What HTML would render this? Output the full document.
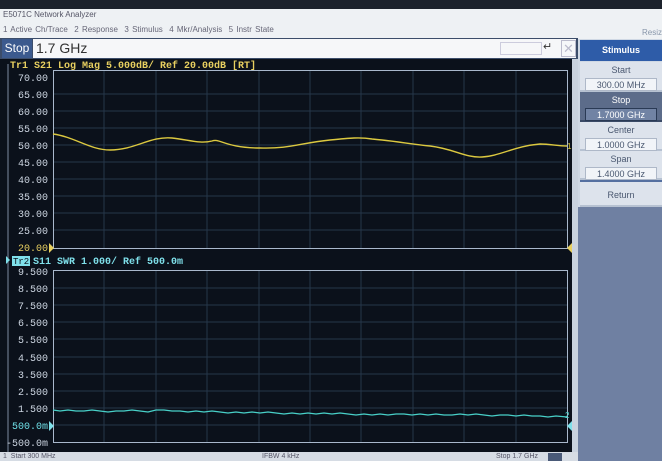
<!DOCTYPE html>
<html><head><meta charset="utf-8"><style>
*{margin:0;padding:0;box-sizing:border-box}
body{width:662px;height:461px;overflow:hidden;background:#dfe4ea;font-family:"Liberation Sans",sans-serif;position:relative}
.a{position:absolute}
.btn{position:absolute;left:580px;width:82px;background:#dde3ec;border-bottom:2px solid #b7c2d2;text-align:center;color:#4a5870;font-size:9px}
.btn .v{margin:3px auto 0;width:72px;height:13px;background:#f1f4f8;border:1px solid #aeb8c8;line-height:12px;font-size:9px}
</style></head><body>
<div class="a" style="left:0;top:0;width:662px;height:9px;background:#1c222c"></div>
<div class="a" style="left:0;top:9px;width:662px;height:30px;background:#eef1f4"></div>
<div class="a" style="left:3px;top:10px;font-size:8px;color:#556">E5071C Network Analyzer</div>
<div class="a" style="left:3px;top:25px;font-size:8px;color:#667;word-spacing:1px">1 Active Ch/Trace &nbsp;2 Response &nbsp;3 Stimulus &nbsp;4 Mkr/Analysis &nbsp;5 Instr State</div>
<div class="a" style="left:642px;top:28px;font-size:8px;color:#8896aa">Resiz</div>
<div class="a" style="left:0;top:38px;width:578px;height:21px;background:#3c4d6a"></div>
<div class="a" style="left:2px;top:39px;width:30px;height:19px;background:#3c5a8e;color:#fff;font-size:12px;line-height:19px;text-align:center">Stop</div>
<div class="a" style="left:33px;top:39px;width:543px;height:19px;background:#f6f7f9;color:#333;font-size:14px;line-height:19px;padding-left:3px">1.7 GHz</div>
<div class="a" style="left:500px;top:42px;width:42px;height:13px;border:1px solid #ccd;"></div>
<div class="a" style="left:543px;top:40px;width:18px;height:17px;font-size:11px;color:#333">↵</div>
<div class="a" style="left:561px;top:40px;width:15px;height:17px;border:1px solid #bbc;color:#bbc;font-size:13px;line-height:15px;text-align:center">✕</div>
<div class="a" style="left:0;top:59px;width:578px;height:393px;background:#0b111b"></div>
<div class="a" style="left:572px;top:59px;width:6px;height:393px;background:#c9d2de"></div>
<svg class="a" style="left:0;top:59px" width="572" height="393" viewBox="0 59 572 393">
<g stroke="#26364a" stroke-width="1">
<path d="M53 94H567M53 111H567M53 128H567M53 145H567M53 162H567M53 179H567M53 196H567M53 213H567M53 230H567"/>
<path d="M53 288H567M53 305H567M53 322H567M53 339H567M53 357H567M53 374H567M53 391H567M53 408H567M53 425H567"/>
<path d="M104 70V248M156 70V248M207 70V248M259 70V248M310 70V248M361 70V248M413 70V248M464 70V248M516 70V248"/>
<path d="M104 270V442M156 270V442M207 270V442M259 270V442M310 270V442M361 270V442M413 270V442M464 270V442M516 270V442"/>
</g>
<rect x="53.5" y="70.5" width="514" height="178" fill="none" stroke="#a9b8cc"/>
<rect x="53.5" y="270.5" width="514" height="172" fill="none" stroke="#a9b8cc"/>
<line x1="8" y1="64" x2="8" y2="452" stroke="#7d8aa0" stroke-width="1"/>
<g font-family="Liberation Mono,monospace" font-size="10" fill="#cdd6e2" text-anchor="end">
<text x="48" y="81">70.00</text><text x="48" y="98">65.00</text><text x="48" y="115">60.00</text><text x="48" y="132">55.00</text><text x="48" y="149">50.00</text><text x="48" y="166">45.00</text><text x="48" y="183">40.00</text><text x="48" y="200">35.00</text><text x="48" y="217">30.00</text><text x="48" y="234">25.00</text><text x="48" y="251" fill="#e8d060">20.00</text>
<text x="48" y="275">9.500</text><text x="48" y="292">8.500</text><text x="48" y="309">7.500</text><text x="48" y="326">6.500</text><text x="48" y="343">5.500</text><text x="48" y="361">4.500</text><text x="48" y="378">3.500</text><text x="48" y="395">2.500</text><text x="48" y="412">1.500</text><text x="48" y="429" fill="#6fe0e8">500.0m</text><text x="48" y="446">-500.0m</text>
</g>
<text x="10" y="68" font-family="Liberation Mono,monospace" font-size="10" font-weight="bold" fill="#e8d060">Tr1 S21 Log Mag 5.000dB/ Ref 20.00dB [RT]</text>
<rect x="12" y="256" width="18" height="10" fill="#7fe0ea"/>
<text x="13" y="264" font-family="Liberation Mono,monospace" font-size="9" fill="#0b111b">Tr2</text>
<text x="33" y="264" font-family="Liberation Mono,monospace" font-size="10" font-weight="bold" fill="#7fe0ea">S11 SWR 1.000/ Ref 500.0m</text>
<path d="M6 256l4 4-4 4z" fill="#7fe0ea"/>
<path d="M49 243l5 5-5 5z" fill="#e8d060"/>
<path d="M572 243l-5 5 5 5z" fill="#e8d060"/>
<path d="M49 421l5 5-5 5z" fill="#7fe0ea"/>
<path d="M572 421l-5 5 5 5z" fill="#7fe0ea"/>
<path d="M53 134 C75 137 90 150 110 150 C135 150 150 136 172 138 C190 140 200 144 212 141 C220 138 225 148 260 148 C290 149 300 143 330 140 C350 138 360 137 372 139 C395 141 410 144 430 146 C455 149 465 158 482 157 C500 156 515 146 540 144 C550 144 558 146 567 146" fill="none" stroke="#dcc940" stroke-width="1.4"/>
<text x="567" y="149" font-size="8" fill="#dcc940">1</text>
<polyline points="53,410 60,411 68,410 76,411 84,411 92,410 100,411 108,412 116,411 124,411 132,410 140,411 148,412 156,410 164,410 172,411 180,411 188,412 196,411 204,412 212,411 220,412 228,413 236,412 244,413 252,412 260,413 268,412 276,413 284,414 292,413 300,414 308,413 316,414 324,413 332,414 340,413 348,414 356,415 364,414 372,415 380,414 388,415 396,414 404,414 412,415 420,414 428,415 436,414 444,415 452,415 460,414 468,415 476,414 484,415 492,416 500,415 508,415 516,416 524,415 532,416 540,416 548,417 556,416 567,417" fill="none" stroke="#48d0c8" stroke-width="1.3"/>
<text x="565" y="418" font-size="8" fill="#48d0c8">2</text>
</svg>
<div class="a" style="left:0;top:452px;width:578px;height:9px;background:#d6dce4;font-size:7px;color:#556;line-height:9px">
<span style="position:absolute;left:3px">1 &nbsp;Start 300 MHz</span>
<span style="position:absolute;left:262px">IFBW 4 kHz</span>
<span style="position:absolute;left:496px">Stop 1.7 GHz</span>
<span style="position:absolute;left:548px;top:1px;width:14px;height:8px;background:#4a5a78"></span>
</div>
<div class="a" style="left:578px;top:39px;width:84px;height:422px;background:#6f80a2"></div>
<div class="a" style="left:578px;top:39px;width:84px;height:168px;background:#cfd8e4"></div>
<div class="a" style="left:580px;top:40px;width:82px;height:21px;background:#2e5ca8;color:#fff;font-size:9px;font-weight:bold;text-align:center;line-height:21px">Stimulus</div>
<div class="btn" style="top:62px;height:30px;padding-top:3px">Start<div class="v">300.00 MHz</div></div>
<div class="btn" style="top:92px;height:30px;padding-top:3px;background:#5c6c8a;color:#fff;border-color:#3a4a66">Stop<div class="v" style="background:#7183a4;color:#fff;border-color:#2a3a55">1.7000 GHz</div></div>
<div class="btn" style="top:122px;height:29px;padding-top:3px">Center<div class="v">1.0000 GHz</div></div>
<div class="btn" style="top:151px;height:29px;padding-top:3px">Span<div class="v">1.4000 GHz</div></div>
<div class="btn" style="top:180px;height:27px;line-height:27px;border-top:2px solid #5570a0">Return</div>
</body></html>
